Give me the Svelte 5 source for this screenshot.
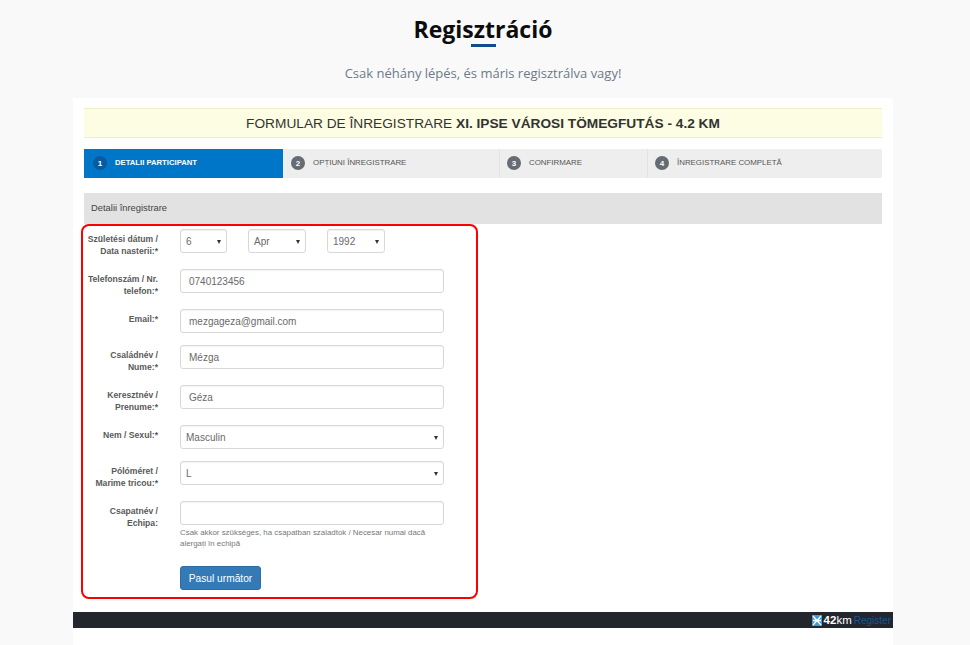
<script>
	const steps = [
		{ num: 1, label: 'DETALII PARTICIPANT', width: 199, active: true },
		{ num: 2, label: 'OPȚIUNI ÎNREGISTRARE', width: 217 },
		{ num: 3, label: 'CONFIRMARE', width: 148 },
		{ num: 4, label: 'ÎNREGISTRARE COMPLETĂ', width: 234 }
	];
	const fields = [
		{ label: 'Telefonszám / Nr. telefon:*', value: '0740123456' },
		{ label: 'Email:*', value: 'mezgageza@gmail.com' },
		{ label: 'Családnév / Nume:*', value: 'Mézga' },
		{ label: 'Keresztnév / Prenume:*', value: 'Géza' }
	];
</script>

<div class="page">
	<header class="head">
		<h1>Regisztráció</h1>
		<span class="rule"></span>
		<p>Csak néhány lépés, és máris regisztrálva vagy!</p>
	</header>

	<main class="card">
		<div class="inner">
			<div class="banner">FORMULAR DE ÎNREGISTRARE <b>XI. IPSE VÁROSI TÖMEGFUTÁS - 4.2 KM</b></div>

			<ol class="steps">
				{#each steps as step}
					<li class:active={step.active} style="width: {step.width}px">
						<span class="num">{step.num}</span>
						<span>{step.label}</span>
					</li>
				{/each}
			</ol>

			<div class="section">Detalii înregistrare</div>

			<form class="form" onsubmit={(e) => e.preventDefault()}>
				<div class="row">
					<label for="day">Születési dátum / Data nasterii:*</label>
					<div class="date">
						<div class="select day" id="day">6<i></i></div>
						<div class="select month">Apr<i></i></div>
						<div class="select year">1992<i></i></div>
					</div>
				</div>

				{#each fields as field}
					<div class="row">
						<label for={field.value}>{field.label}</label>
						<input id={field.value} type="text" value={field.value} />
					</div>
				{/each}

				<div class="row">
					<label for="sex">Nem / Sexul:*</label>
					<div class="select wide" id="sex">Masculin<i></i></div>
				</div>
				<div class="row">
					<label for="size">Pólóméret / Marime tricou:*</label>
					<div class="select wide" id="size">L<i></i></div>
				</div>
				<div class="row team">
					<label for="team">Csapatnév / Echipa:</label>
					<div>
						<input id="team" type="text" />
						<p class="help">Csak akkor szükséges, ha csapatban szaladtok / Necesar numai dacă alergați în echipă</p>
					</div>
				</div>
				<div class="row submit">
					<button type="submit">Pasul următor</button>
				</div>
			</form>
		</div>

		<footer class="foot">
			<svg width="10" height="11" viewBox="0 0 10 11">
				<rect width="10" height="11" fill="#3f9ad6" />
				<path d="M1 1l8 9M9 1L1 10M1 5.5h8" stroke="#fff" stroke-width="1.3" fill="none" />
			</svg>
			<span class="brand"><b>42</b>km</span>
			<span class="reg">Register</span>
		</footer>
	</main>
</div>

<style>
	:global(body) {
		margin: 0;
		background: #f9f9f9;
	}
	.page {
		height: 645px;
		overflow: hidden;
		font-family: 'Liberation Sans', Arial, sans-serif;
	}
	.head {
		display: flex;
		flex-direction: column;
		align-items: center;
		height: 98px;
		padding-right: 4px;
		box-sizing: border-box;
		font-family: 'Open Sans', sans-serif;
	}
	h1 {
		margin: 14px 0 0;
		font-size: 23px;
		line-height: 30px;
		font-weight: 700;
		color: #0c0c0c;
	}
	.rule {
		width: 25px;
		height: 3px;
		background: #0f4c8a;
	}
	.head p {
		margin: 16px 0 0;
		font-size: 13px;
		line-height: 20px;
		color: #6c7a89;
	}
	.card {
		width: 820px;
		margin-left: 73px;
		background: #fff;
		height: 547px;
	}
	.inner {
		padding: 10px 11px 0;
		height: 504px;
	}
	.banner {
		height: 30px;
		line-height: 29px;
		box-sizing: border-box;
		text-align: center;
		font-size: 13.7px;
		color: #333;
		background: #fdfde3;
		border-top: 1px solid #eeeecb;
		border-bottom: 1px solid #eeeecb;
	}
	.steps {
		display: flex;
		list-style: none;
		margin: 11px 0 0;
		padding: 0;
		height: 29px;
		background: #eee;
		border-radius: 0 2px 2px 0;
	}
	.steps li {
		display: flex;
		align-items: center;
		gap: 8px;
		padding: 0 0 2px 8px;
		box-sizing: border-box;
		font-size: 7.9px;
		color: #555;
		border-right: 1px solid #e4e4e4;
	}
	.steps li:nth-child(n + 3) {
		padding-left: 7px;
	}
	.steps li:last-child {
		border-right: 0;
	}
	.steps li.active {
		background: #0076c9;
		padding-left: 9px;
		font-size: 7.7px;
		color: #fff;
		font-weight: 700;
		border-right: 0;
	}
	.num {
		display: flex;
		align-items: center;
		justify-content: center;
		width: 14px;
		height: 14px;
		margin-top: 1px;
		border-radius: 50%;
		background: #666c73;
		color: #fff;
		font-size: 8px;
		font-weight: 700;
	}
	.active .num {
		background: #0b5a9e;
	}
	.section {
		margin-top: 15px;
		height: 31px;
		line-height: 30px;
		padding-left: 7px;
		font-size: 9.4px;
		color: #444;
		background: #e2e2e2;
	}
	.form {
		box-sizing: border-box;
		width: 397px;
		height: 375px;
		margin-left: -3px;
		padding: 3px 0 0;
		border: 2px solid #fa0000;
		border-radius: 8px;
	}
	.row {
		display: grid;
		grid-template-columns: 73px 264px;
		column-gap: 22px;
		margin: 0 0 12px 2px;
	}
	label {
		padding-top: 4px;
		font-size: 8.6px;
		line-height: 12px;
		font-weight: 700;
		color: #5a5a5a;
		text-align: right;
	}
	.date {
		display: flex;
	}
	.select,
	input {
		position: relative;
		box-sizing: border-box;
		height: 24px;
		line-height: 23px;
		padding: 0 8px;
		font-family: inherit;
		font-size: 10px;
		color: #6a6a6a;
		background: #fff;
		border: 1px solid #d8d8d8;
		border-radius: 3px;
		box-shadow: inset 0 1px 1px rgba(0, 0, 0, 0.05);
	}
	input {
		display: block;
		width: 264px;
	}
	.select {
		padding-left: 5px;
	}
	.select i {
		position: absolute;
		right: 5px;
		top: 10px;
		border-left: 2.5px solid transparent;
		border-right: 2.5px solid transparent;
		border-top: 4px solid #333;
	}
	.day {
		width: 47px;
	}
	.month {
		width: 58px;
		margin-left: 21px;
	}
	.year {
		width: 58px;
		margin-left: 21px;
	}
	.help {
		margin: 2px 0 0;
		font-size: 7.9px;
		line-height: 11px;
		color: #777;
	}
	.team {
		margin-bottom: 17px;
	}
	.submit {
		display: block;
		margin-left: 97px;
	}
	button {
		width: 81px;
		height: 24px;
		padding: 0;
		font-family: inherit;
		font-size: 10.2px;
		color: #fff;
		background: #337ab7;
		border: 1px solid #2e6da4;
		border-radius: 3px;
	}
	.foot {
		display: flex;
		align-items: center;
		justify-content: flex-end;
		gap: 2px;
		height: 16px;
		padding-right: 2px;
		background: #24262e;
	}
	.brand {
		font-size: 11.5px;
		color: #fff;
	}
	.brand b {
		font-weight: 700;
	}
	.reg {
		font-size: 10px;
		color: #16578f;
	}
</style>
